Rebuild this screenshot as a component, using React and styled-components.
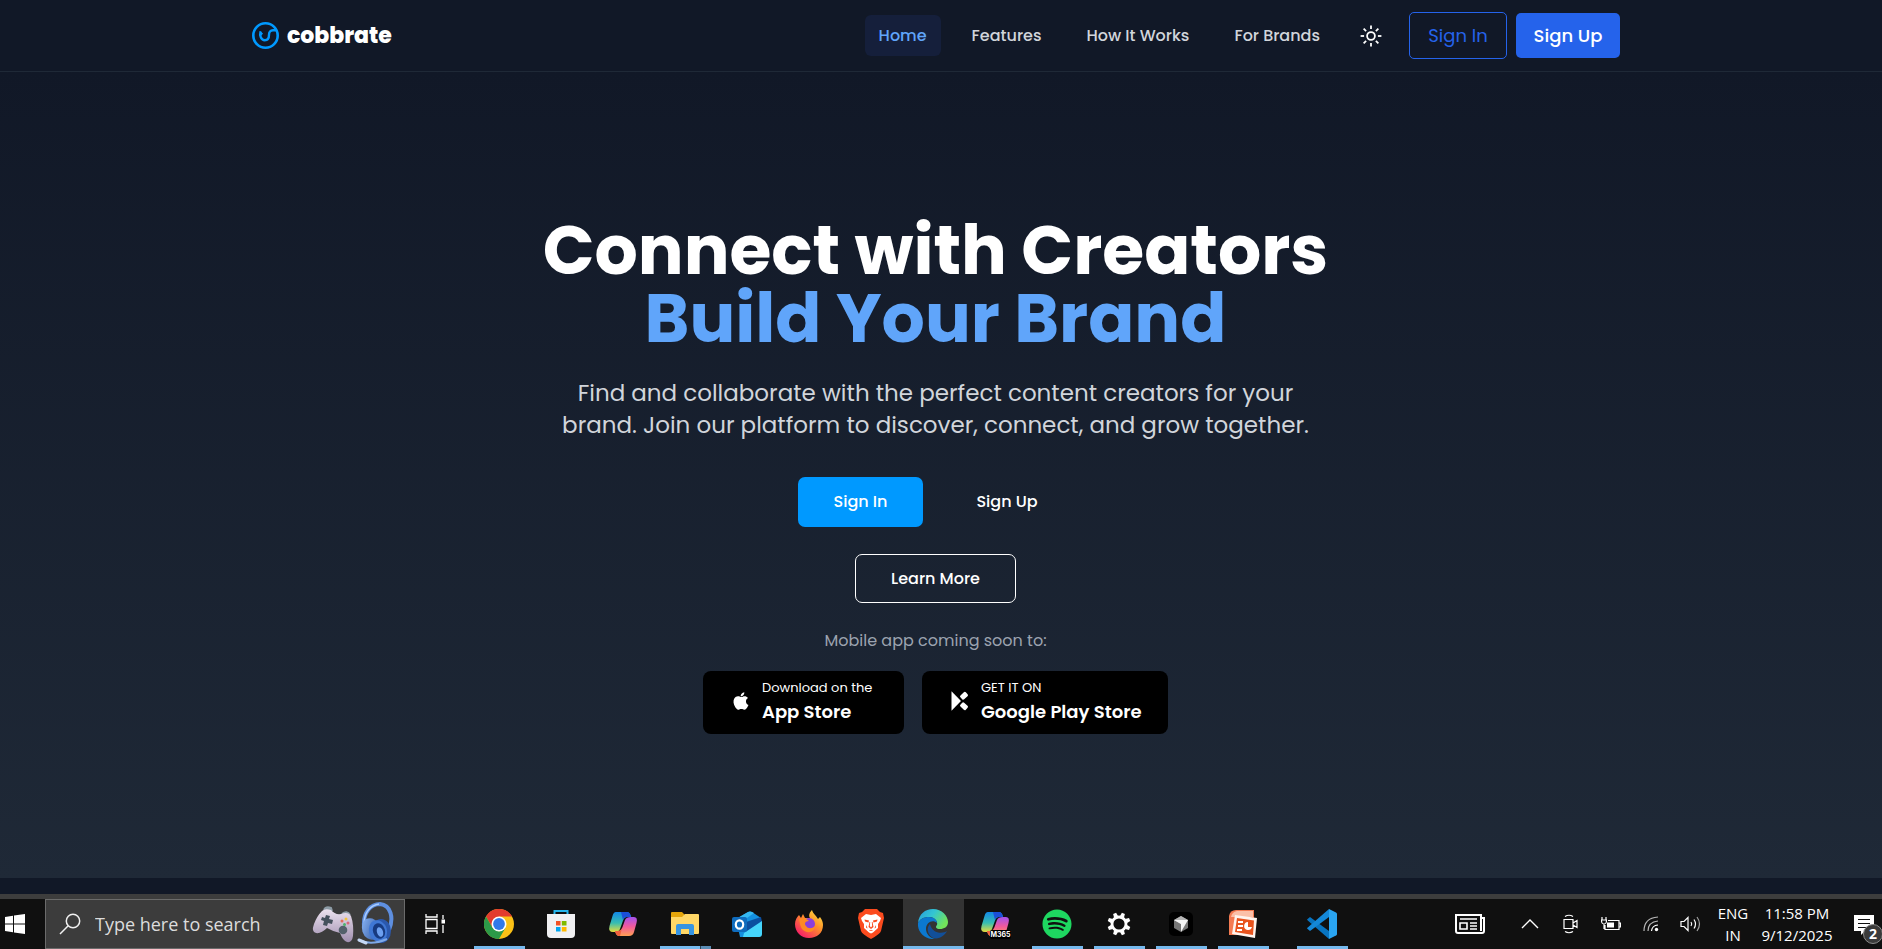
import React from "react";
import styled, { createGlobalStyle, css } from "styled-components";
import { IoLogoApple } from "react-icons/io5";
import { FaSpotify } from "react-icons/fa";

const GlobalStyle = createGlobalStyle`
  *, *::before, *::after { box-sizing: border-box; }
  html, body, #root { margin: 0; min-height: 100vh; }
  body {
    background: #111827;
    color: #ffffff;
    font-family: Poppins, Inter, "Open Sans", sans-serif;
    font-size: 16px;
  }
  button, input { font: inherit; color: inherit; }
  button { cursor: pointer; }
  a { color: inherit; text-decoration: none; }
  svg { display: block; }
`;

const Screen = styled.div`
  display: flex;
  flex-direction: column;
  min-height: 100vh;
`;

const Header = styled.header`
  height: 72px;
  padding-right: 10px;
  border-bottom: 1px solid #1f2937;
  background: #111827;
`;

const HeaderInner = styled.div`
  display: flex;
  align-items: center;
  justify-content: space-between;
  width: 100%;
  max-width: 1368px;
  height: 100%;
  margin: 0 auto;
`;

const Brand = styled.a`
  display: flex;
  align-items: center;
  gap: 8px;
  font-size: 22px;
  font-weight: 800;
  line-height: 31px;
`;

const Nav = styled.nav`
  display: flex;
  align-items: center;
  gap: 17px;
`;

const NavLink = styled.a`
  padding: 0 14px;
  border-radius: 6px;
  line-height: 41px;
  font-weight: 500;
  color: ${(p) => (p.$active ? "#60a5fa" : "#d1d5db")};
  background: ${(p) => (p.$active ? "#151f3b" : "transparent")};
`;

const HeaderActions = styled.div`
  display: flex;
  align-items: center;
  gap: 9px;
`;

const ThemeToggle = styled.button`
  display: grid;
  place-items: center;
  width: 40px;
  height: 40px;
  margin-right: 9px;
  padding: 0;
  border: 0;
  background: transparent;
`;

const AccountButton = styled.button`
  padding: 0;
  border-radius: 5px;
  font-size: 18px;
  ${(p) =>
    p.$solid
      ? css`
          width: 104px;
          height: 45px;
          border: 0;
          background: #2563eb;
          font-weight: 500;
        `
      : css`
          width: 98px;
          height: 47px;
          border: 1px solid #2563eb;
          background: transparent;
          color: #2563eb;
        `}
`;

const Hero = styled.main`
  display: flex;
  flex: 1;
  flex-direction: column;
  align-items: center;
  justify-content: center;
  padding: 0 11px 0 0;
  text-align: center;
  background: linear-gradient(#111827, #1f2937);
`;

const Title = styled.h1`
  margin: 0 0 24px;
  font-size: 68px;
  font-weight: 700;
  line-height: 68px;
`;

const Accent = styled.span`
  display: block;
  color: #60a5fa;
`;

const Lead = styled.p`
  max-width: 760px;
  margin: 0 0 36px;
  font-size: 23px;
  line-height: 32px;
  color: #d1d5db;
`;

const ButtonRow = styled.div`
  display: flex;
  align-items: center;
  gap: 18px;
  margin-bottom: ${(p) => p.$space}px;
`;

const HeroButton = styled.button`
  min-width: ${(p) => p.$width}px;
  height: ${(p) => (p.$kind === "outline" ? 49 : 50)}px;
  padding: 0 20px;
  border: ${(p) => (p.$kind === "outline" ? "1px solid #ffffff" : "0")};
  border-radius: 7px;
  background: ${(p) => (p.$kind === "primary" ? "#0099ff" : "transparent")};
  font-weight: 500;
`;

const Note = styled.p`
  margin: 0 0 18px;
  line-height: 24px;
  color: #9ca3af;
`;

const StoreButton = styled.button`
  display: flex;
  align-items: center;
  gap: 11px;
  width: ${(p) => p.$width}px;
  height: 63px;
  padding: 0 0 2px 28px;
  border: 0;
  border-radius: 8px;
  background: #000000;
  text-align: left;
`;

const StoreText = styled.span`
  display: flex;
  flex-direction: column;
`;

const StoreSmall = styled.span`
  font-size: 13px;
  line-height: 20px;
`;

const StoreName = styled.span`
  font-size: 18px;
  font-weight: 600;
  line-height: 27px;
`;

const PageEnd = styled.div`
  height: 16px;
  background: #111827;
`;

const Taskbar = styled.footer`
  display: flex;
  height: 55px;
  border-top: 5px solid #3d3d3d;
  background: #101010;
  color: #ffffff;
  font-family: "Segoe UI", "Open Sans", "Noto Sans", sans-serif;
`;

const BarButton = styled.button`
  display: flex;
  align-items: center;
  justify-content: center;
  flex: none;
  width: ${(p) => p.$width}px;
  height: 50px;
  padding: 0;
  border: 0;
  background: transparent;
`;

const StartButton = styled(BarButton)`
  justify-content: flex-start;
  padding-left: 5px;
`;

const SearchBox = styled.label`
  display: flex;
  align-items: center;
  flex: none;
  width: 360px;
  height: 50px;
  padding: 0 9px 0 13px;
  border: 1px solid #6b6b6b;
  background: #3c3c3c;
`;

const SearchInput = styled.input`
  flex: 1;
  min-width: 0;
  margin-left: 14px;
  padding: 0;
  border: 0;
  outline: 0;
  background: transparent;
  font-size: 18px;
  &::placeholder { color: #dcdcdc; opacity: 1; }
`;

const Apps = styled.div`
  display: flex;
  gap: 1px;
  padding-left: 4px;
`;

const AppButton = styled.button`
  display: grid;
  grid-template-rows: 43px 4px;
  align-content: end;
  justify-items: center;
  width: 61px;
  height: 50px;
  margin-left: ${(p) => (p.$apart ? 17 : 0)}px;
  padding: 0;
  border: 0;
  background: ${(p) => (p.$active ? "#333333" : "transparent")};
`;

const AppIcon = styled.span`
  display: grid;
  place-items: center;
  padding-right: 2px;
`;

const Indicator = styled.span`
  align-self: end;
  width: ${(p) => (p.$wide ? 61 : 51)}px;
  height: 3px;
  background: ${(p) =>
    p.$stacked
      ? "linear-gradient(90deg, #76b9ed 40px, #2d4558 40px, #2d4558 41px, #5b8db5 41px)"
      : p.$on
        ? "#76b9ed"
        : "transparent"};
`;

const Tray = styled.div`
  display: flex;
  flex: none;
  align-items: center;
  margin-left: auto;
`;

const TrayText = styled.button`
  width: ${(p) => p.$width}px;
  height: 50px;
  padding: 0;
  border: 0;
  background: transparent;
  font-size: 15px;
  line-height: 22px;
  white-space: nowrap;
`;

const Notices = styled.button`
  position: relative;
  width: 44px;
  height: 50px;
  padding: 1px 0 0 16px;
  border: 0;
  background: transparent;
`;

const Badge = styled.span`
  position: absolute;
  right: -1px;
  bottom: 5px;
  width: 20px;
  height: 20px;
  border: 1px solid #8a8a8a;
  border-radius: 50%;
  background: #3a3a3a;
  font-size: 14px;
  font-weight: 700;
  line-height: 18px;
  text-align: center;
`;

const CobbrateLogo = () => (
  <svg width="27" height="27" viewBox="0 0 27 27" fill="none" stroke="#0099ff" aria-hidden="true">
    <circle cx="13.5" cy="13.5" r="12.2" strokeWidth="2.6" />
    <path d="M8.6 9.4C7.2 14 9.4 18.3 12.8 18.3C16.4 18.3 17 15.6 17 12.8C17 10 18.4 8.3 21 8.300H25" strokeWidth="2.4" />
    <path d="M8 9L11 11.500L9 14Z" fill="#0099ff" stroke="none" />
  </svg>
);

const PlayStoreIcon = () => (
  <svg width="20" height="20" viewBox="0 0 20 20" fill="#ffffff" aria-hidden="true">
    <path d="M1.500 0.300L11 10L1.500 19.700Z" />
    <rect x="-3.700" y="-2.700" width="7.400" height="5.400" rx="1.400" transform="translate(14 4.800) rotate(-43)" />
    <rect x="-3.700" y="-2.700" width="7.400" height="5.400" rx="1.400" transform="translate(14 15.200) rotate(43)" />
  </svg>
);

const SunIcon = () => (
  <svg width="22" height="22" viewBox="-11 -11 22 22" fill="none" stroke="#ffffff" strokeWidth="1.8" aria-hidden="true">
    <circle r="3.9" />
    {[0, 45, 90, 135, 180, 225, 270, 315].map((a) => (
      <path key={a} d="M0 -6.9V-10.4" transform={`rotate(${a})`} />
    ))}
  </svg>
);

const WindowsIcon = () => (
  <svg width="20" height="20" viewBox="0 0 20 20" fill="#ffffff" aria-hidden="true">
    <path d="M0 3L8 1.8V9.4H0ZM9 1.6L20 0V9.4H9ZM0 10.4H8V18.2L0 17ZM9 10.4H20V20L9 18.4Z" />
  </svg>
);

const SearchIcon = () => (
  <svg width="22" height="22" viewBox="0 0 22 22" fill="none" stroke="#f0f0f0" strokeWidth="1.5" aria-hidden="true">
    <circle cx="14" cy="8" r="6.7" />
    <path d="M9.2 12.8L1 21" />
  </svg>
);

const GamingArt = () => (
  <svg width="84" height="44" viewBox="0 0 84 44" aria-hidden="true">
    <defs>
      <linearGradient id="pad" x1="0" y1="0" x2="0" y2="1">
        <stop offset="0" stopColor="#ece2ef" />
        <stop offset="1" stopColor="#a08fb0" />
      </linearGradient>
      <linearGradient id="cup" x1="0" y1="0" x2="1" y2="1">
        <stop offset="0" stopColor="#8db8f8" />
        <stop offset="1" stopColor="#234b96" />
      </linearGradient>
    </defs>
    <path d="M13 8Q15 4 20 6L21 9M31 12Q36 8 39 13" fill="#8c9ba5" stroke="#8c9ba5" strokeWidth="2" />
    <path d="M11 9Q14 6 20 8Q24 13 30 12Q37 9 40 14Q43 23 42 34Q41 41 36 40Q32 39 29 31Q23 30 16 26Q10 32 5 31Q0 30 3 22Q6 14 11 9Z" fill="url(#pad)" />
    <path d="M15 13L19 14L18 17L22 18L21 22L17 21L16 24L12 23L13 19L10 18L11 15L14 16Z" fill="#44505c" />
    <circle cx="32" cy="28" r="4.3" fill="#53606b" />
    <circle cx="35" cy="17" r="1.5" fill="#f4c23d" />
    <circle cx="31" cy="19" r="1.5" fill="#e36c5b" />
    <circle cx="37" cy="21" r="1.5" fill="#d9667d" />
    <circle cx="33.5" cy="22.5" r="1.5" fill="#4eb36b" />
    <path d="M53 24C52 10 60 2 69 2C80 3 83 16 78 28" fill="none" stroke="#5e8fe0" strokeWidth="4" />
    <path d="M53 22C53 10 60 3 68 2" fill="none" stroke="#a9ccff" strokeWidth="1.5" />
    <ellipse cx="70" cy="29" rx="10" ry="12" fill="#2b58ad" />
    <ellipse cx="60" cy="27" rx="9" ry="11" transform="rotate(-18 60 27)" fill="url(#cup)" />
    <ellipse cx="67" cy="29" rx="9" ry="11" transform="rotate(-18 67 29)" fill="#3f77d4" />
    <ellipse cx="68" cy="29" rx="6" ry="8" transform="rotate(-18 68 29)" fill="#173a80" />
    <ellipse cx="69" cy="30" rx="3" ry="5" transform="rotate(-18 69 30)" fill="#6da0f0" />
    <path d="M48 38Q60 44 76 37" fill="none" stroke="#7ea9e8" strokeWidth="2" />
    <path d="M48 38L55 41" stroke="#c5d8f5" strokeWidth="3" strokeLinecap="round" />
  </svg>
);

const TaskViewIcon = () => (
  <svg width="20" height="20" viewBox="0 0 20 20" fill="none" stroke="#ffffff" strokeWidth="1.3" aria-hidden="true">
    <path d="M1 0V3H12V0M1 20V17H12V20M1 5.5H12V14.5H1ZM18 1V5M18 11V19" />
    <path d="M16.5 5.5H20V9.5H16.5Z" fill="#ffffff" stroke="none" />
  </svg>
);

const ChromeIcon = () => (
  <svg width="30" height="30" viewBox="0 0 30 30" aria-hidden="true">
    <circle cx="15" cy="15" r="15" fill="#fbc116" />
    <path d="M15 15V7.5H28A15 15 0 0 0 2 7.5L8.5 18.7Z" fill="#e33b2e" />
    <path d="M15 22.5L8.5 18.7L2 7.5A15 15 0 0 0 15 30L21.5 18.7Z" fill="#2c9a48" />
    <circle cx="15" cy="15" r="7.5" fill="#ffffff" />
    <circle cx="15" cy="15" r="5.9" fill="#3279ea" />
  </svg>
);

const StoreIcon = () => (
  <svg width="30" height="30" viewBox="0 0 30 30" aria-hidden="true">
    <path d="M8.5 6V2H21.5V6" fill="none" stroke="#26b5ec" strokeWidth="2" />
    <path d="M1 5H29V25Q29 29 25 29H5Q1 29 1 25Z" fill="#f0f0f2" />
    <path d="M10 12H14.5V16.5H10Z" fill="#f25022" />
    <path d="M15.8 12H20.5V16.5H15.8Z" fill="#7fba00" />
    <path d="M10 18H14.5V22.5H10Z" fill="#00a4ef" />
    <path d="M15.8 18H20.5V22.5H15.8Z" fill="#ffb900" />
  </svg>
);

const CopilotIcon = ({ id, labelled }) => (
  <svg width="32" height="30" viewBox="0 0 32 30" aria-hidden="true">
    <defs>
      <linearGradient id={`${id}a`} x1="0" y1="0" x2="0" y2="1">
        <stop offset="0" stopColor="#1288e8" />
        <stop offset="0.55" stopColor="#37bdb1" />
        <stop offset="1" stopColor="#e7dc3b" />
      </linearGradient>
      <linearGradient id={`${id}b`} x1="0" y1="0" x2="0" y2="1">
        <stop offset="0" stopColor="#a252f0" />
        <stop offset="0.5" stopColor="#f15a9b" />
        <stop offset="1" stopColor="#ffa052" />
      </linearGradient>
    </defs>
    <path d="M9 3H20Q23 3 24 8H20Q17 8 15.5 13L13 20Q12 23 8 23H6Q1 23 2.5 17L5.5 7Q6.500 3 9 3Z" fill={`url(#${id}a)`} />
    <path d="M14 3H20Q23 3 24 8H20Q17 8 16 11Z" fill="#1b4fd8" />
    <path d="M24 8H27Q31 8 29.500 14L27 23Q26 27 22 27H12Q9 27 8 22H11Q14 22 15.500 18L18 11Q19 8 24 8Z" fill={`url(#${id}b)`} />
    <path d="M8 22H11Q14 22 15 19L13 27Q9 27 8 22Z" fill="#f0603c" />
    {labelled && (
      <>
        <rect x="11" y="21" width="21" height="9" rx="2" fill="#000000" />
        <text x="21.5" y="28.200" fill="#ffffff" fontSize="7" fontWeight="700" textAnchor="middle" fontFamily="Inter, sans-serif">
          M365
        </text>
      </>
    )}
  </svg>
);

const FolderIcon = () => (
  <svg width="28" height="28" viewBox="0 0 28 28" aria-hidden="true">
    <path d="M0 3Q0 2 1 2H11L14 5H27Q28 5 28 6V10H0Z" fill="#e5a50a" />
    <path d="M0 7H11L14 4H27Q28 4 28 5V23Q28 24 27 24H1Q0 24 0 23Z" fill="#ffd766" />
    <path d="M5 25V16Q5 14 7 14H21Q23 14 23 16V25H18V19H10V25Z" fill="#3594e2" />
  </svg>
);

const OutlookIcon = () => (
  <svg width="30" height="28" viewBox="0 0 30 28" aria-hidden="true">
    <path d="M4 9L16 2Q18 1 20 2L29 8V24Q29 27 26 27H8Z" fill="#1490df" />
    <path d="M14 12L29 7L30 12L14 22Z" fill="#0b4f9f" />
    <path d="M12 23L30 11V24Q30 27 27 27H11Z" fill="#45d5fb" />
    <path d="M4 9L16 2Q18 1 20 2L22 3L8 13Z" fill="#35b8f1" />
    <rect y="7" width="15" height="15" rx="2" fill="#0f6cbd" />
    <ellipse cx="7.500" cy="14.500" rx="3.700" ry="4.200" fill="none" stroke="#ffffff" strokeWidth="2.200" />
  </svg>
);

const FirefoxIcon = () => (
  <svg width="30" height="30" viewBox="0 0 30 30" aria-hidden="true">
    <defs>
      <linearGradient id="fox" x1="1" y1="0" x2="0.2" y2="1">
        <stop offset="0" stopColor="#fff044" />
        <stop offset="0.45" stopColor="#ff9229" />
        <stop offset="1" stopColor="#f5156c" />
      </linearGradient>
    </defs>
    <path d="M15 29C7 29 1 23 1 15C1 11 3 8 5 6L7 9L9 5L11 9H16C14 6 16 3 18 1C19 5 22 6 24 10L26 8C28 11 29 13 29 16C29 24 23 29 15 29Z" fill="url(#fox)" />
    <circle cx="15" cy="15" r="6" fill="#8b3fdb" />
    <path d="M5 10C8 8 12 9 15 12C11 12 10 15 12 17C14 20 18 20 21 17C21 24 12 25 8 20C6 17 6 14 5 10Z" fill="#ff8a23" />
  </svg>
);

const BraveIcon = () => (
  <svg width="28" height="30" viewBox="0 0 28 30" aria-hidden="true">
    <path d="M8 0H20L23 3L26 4L27 9L24 22Q23 25 14 30Q5 25 4 22L1 9L2 4L5 3Z" fill="#fb4b1e" />
    <path d="M9 5L14 6L19 5L24 9L23 12L21 15L21 19L16 23.500L14 24.500L12 23.500L7 19L7 15L5 12L4 9Z" fill="#ffffff" />
    <path d="M7.500 10.500L12 11.500L11.500 13.500L8 12.500ZM20.500 10.500L16 11.500L16.500 13.500L20 12.500ZM12.500 13H13.200L12.800 17L14 18.500L15.200 17L14.800 13H15.500L16.500 18L14 20L11.500 18ZM9.500 16L10.500 19.500L9 18.500ZM18.500 16L17.500 19.500L19 18.500ZM11.500 22L14 20.800L16.500 22L14 21.800Z" fill="#fb4b1e" />
  </svg>
);

const EdgeIcon = () => (
  <svg width="30" height="30" viewBox="0 0 30 30" aria-hidden="true">
    <defs>
      <linearGradient id="edgeTop" x1="0" y1="0" x2="1" y2="0.5">
        <stop offset="0" stopColor="#279bde" />
        <stop offset="0.5" stopColor="#33c5d2" />
        <stop offset="1" stopColor="#72e35a" />
      </linearGradient>
    </defs>
    <path d="M0 14C1 5 7 0 15 0C24 0 30 7 30 13C30 18 26 20 22 20C18 20 17 18 19 16C20 14 18 8 11 8C6 8 2 10 0 14Z" fill="url(#edgeTop)" />
    <path d="M0 14C2 10 6 8 11 8C16 8 19 11 19 14C15 10 8 13 8 20C8 25 12 29 17 30C7 31 -1 23 0 14Z" fill="#0b78cf" />
    <path d="M12 15C7 20 11 29 18 29.500C23 29 27 26 29 22C25 25 14 25 12 15Z" fill="#124f99" />
  </svg>
);

const SpotifyIcon = () => (
  <FaSpotify size={30} color="#1ed760" aria-hidden="true" />
);

const GearIcon = () => (
  <svg width="24" height="24" viewBox="-12 -12 24 24" aria-hidden="true">
    <circle r="7" fill="none" stroke="#ffffff" strokeWidth="2.800" />
    {[22.5, 67.5, 112.5, 157.5, 202.5, 247.5, 292.5, 337.5].map((a) => (
      <path key={a} d="M-2.200 -7.500L-1.600 -11.500H1.600L2.200 -7.500Z" fill="#ffffff" transform={`rotate(${a})`} />
    ))}
  </svg>
);

const CubeIcon = () => (
  <svg width="24" height="24" viewBox="0 0 24 24" aria-hidden="true">
    <rect width="24" height="24" rx="5" fill="#000000" />
    <path d="M12 4L19 8V16L12 20L5 16V8Z" fill="#777777" />
    <path d="M5 8L12 4L19 8L12 12Z" fill="#b5b5b5" />
    <path d="M5 8H19L12 20V12Z" fill="#f4f4f4" />
  </svg>
);

const PowerPointIcon = () => (
  <svg width="30" height="30" viewBox="0 0 30 30" aria-hidden="true">
    <path d="M1 7Q2 1 8 1H26V26H1Z" fill="#f47b52" />
    <path d="M3 8Q4 3 9 2H25V8Z" fill="#fbc0a8" />
    <path d="M7 6L29 9L27 29L4 25Z" fill="#fff4ee" />
    <path d="M9 9L26 11.500L25 26L7 23Z" fill="#e8541e" />
    <path d="M10 13H15M10 17H15M9 21H14" stroke="#ffffff" strokeWidth="2" />
    <path d="M20 13A4 4 0 1 0 24 18H20Z" fill="#ffffff" />
  </svg>
);

const CodeIcon = () => (
  <svg width="30" height="30" viewBox="0 0 30 30" aria-hidden="true">
    <path d="M22 0L29 3.500Q30 4 30 5V25Q30 26 29 26.500L22 30Z" fill="#2aa5f2" />
    <path d="M0 10.500L3 8L22 22V30L1 11.800Z" fill="#0874c0" />
    <path d="M0 19.500L3 22L22 8V0L1 18.200Z" fill="#1488d8" />
  </svg>
);

const NewsIcon = () => (
  <svg width="30" height="20" viewBox="0 0 30 20" fill="none" stroke="#ffffff" strokeWidth="2" aria-hidden="true">
    <path d="M26 4H29V17Q29 19 27 19H3Q1 19 1 17V1H26V17" />
    <path d="M5 9H12V15H5ZM5 5H22M15 9H22M15 12H22M15 15H22" strokeWidth="1.600" />
  </svg>
);

const ChevronIcon = () => (
  <svg width="18" height="10" viewBox="0 0 18 10" fill="none" stroke="#ffffff" strokeWidth="1.400" aria-hidden="true">
    <path d="M1 9L9 1L17 9" />
  </svg>
);

const MeetIcon = () => (
  <svg width="16" height="20" viewBox="0 0 16 20" fill="none" stroke="#ffffff" strokeWidth="1.200" aria-hidden="true">
    <path d="M1 5.500H10V14.500H1ZM10 9L14 6.500V13.500L10 11M2 2.500Q6 0 10 2.500M2 17.500Q6 20 10 17.500" />
  </svg>
);

const BatteryIcon = () => (
  <svg width="20" height="14" viewBox="0 0 20 14" fill="none" stroke="#ffffff" strokeWidth="1.200" aria-hidden="true">
    <path d="M7 3.500H18V12.500H4V8M18 6H19.500V10H18M1 0V3M5 0V3M0.600 3H5.400V5Q5 7 3 7Q1 7 0.600 5ZM3 7V12" />
    <path d="M6 5.500H13V10.500H6Z" fill="#ffffff" stroke="none" />
  </svg>
);

const WifiIcon = () => (
  <svg width="16" height="16" viewBox="0 0 16 16" fill="none" stroke="#ffffff" strokeWidth="1.200" aria-hidden="true">
    <path d="M1 15Q1 2 15 1M5 15Q5 6 15 5" stroke="#b8b8b8" />
    <path d="M8.500 15Q9 9.500 15 9" />
    <circle cx="13.500" cy="13.500" r="1.700" fill="#ffffff" stroke="none" />
  </svg>
);

const VolumeIcon = () => (
  <svg width="22" height="16" viewBox="0 0 22 16" fill="none" stroke="#ffffff" strokeWidth="1.200" aria-hidden="true">
    <path d="M1 5.500H4L8 1.500V14.500L4 10.500H1ZM11 6Q12.500 8 11 10M14 3.500Q17 8 14 12.500" />
    <path d="M17 1Q22 8 17 15" stroke="#a0a0a0" />
  </svg>
);

const NoticeIcon = () => (
  <svg width="20" height="20" viewBox="0 0 20 20" aria-hidden="true">
    <path d="M0 0H20V16H11L7 20V16H0Z" fill="#ffffff" />
    <path d="M4 4.500H16M4 8.500H16M4 12.500H12" stroke="#101010" strokeWidth="1.200" />
  </svg>
);

const NAV = ["Home", "Features", "How It Works", "For Brands"];

const APPS = [
  { name: "Chrome", icon: <ChromeIcon />, on: true },
  { name: "Microsoft Store", icon: <StoreIcon /> },
  { name: "Copilot", icon: <CopilotIcon id="cp" /> },
  { name: "File Explorer", icon: <FolderIcon />, on: true, stacked: true },
  { name: "Outlook", icon: <OutlookIcon /> },
  { name: "Firefox", icon: <FirefoxIcon /> },
  { name: "Brave", icon: <BraveIcon /> },
  { name: "Edge", icon: <EdgeIcon />, on: true, active: true },
  { name: "Microsoft 365", icon: <CopilotIcon id="ms" labelled /> },
  { name: "Spotify", icon: <SpotifyIcon />, on: true },
  { name: "Settings", icon: <GearIcon />, on: true },
  { name: "Cursor", icon: <CubeIcon />, on: true },
  { name: "PowerPoint", icon: <PowerPointIcon />, on: true },
  { name: "Visual Studio Code", icon: <CodeIcon />, on: true, apart: true },
];

const TRAY = [
  { name: "News", icon: <NewsIcon />, width: 80 },
  { name: "Show hidden icons", icon: <ChevronIcon />, width: 40 },
  { name: "Meet now", icon: <MeetIcon />, width: 42 },
  { name: "Battery", icon: <BatteryIcon />, width: 38 },
  { name: "Wi-Fi", icon: <WifiIcon />, width: 42 },
  { name: "Volume", icon: <VolumeIcon />, width: 38 },
];

function SiteHeader() {
  return (
    <Header>
      <HeaderInner>
        <Brand href="#">
          <CobbrateLogo />
          cobbrate
        </Brand>
        <HeaderActions>
          <Nav>
            {NAV.map((item, i) => (
              <NavLink key={item} href="#" $active={i === 0}>
                {item}
              </NavLink>
            ))}
            <ThemeToggle aria-label="Toggle theme">
              <SunIcon />
            </ThemeToggle>
          </Nav>
          <AccountButton>Sign In</AccountButton>
          <AccountButton $solid>Sign Up</AccountButton>
        </HeaderActions>
      </HeaderInner>
    </Header>
  );
}

function HeroSection() {
  return (
    <Hero>
      <Title>
        Connect with Creators
        <Accent>Build Your Brand</Accent>
      </Title>
      <Lead>
        Find and collaborate with the perfect content creators for your brand. Join our platform to discover,
        connect, and grow together.
      </Lead>
      <ButtonRow $space={27}>
        <HeroButton $kind="primary" $width={125}>Sign In</HeroButton>
        <HeroButton $kind="plain" $width={132}>Sign Up</HeroButton>
      </ButtonRow>
      <ButtonRow $space={26}>
        <HeroButton $kind="outline" $width={161}>Learn More</HeroButton>
      </ButtonRow>
      <Note>Mobile app coming soon to:</Note>
      <ButtonRow $space={0}>
        <StoreButton $width={201}>
          <IoLogoApple size={20} aria-hidden="true" />
          <StoreText>
            <StoreSmall>Download on the</StoreSmall>
            <StoreName>App Store</StoreName>
          </StoreText>
        </StoreButton>
        <StoreButton $width={246}>
          <PlayStoreIcon />
          <StoreText>
            <StoreSmall>GET IT ON</StoreSmall>
            <StoreName>Google Play Store</StoreName>
          </StoreText>
        </StoreButton>
      </ButtonRow>
    </Hero>
  );
}

function DesktopTaskbar() {
  return (
    <Taskbar>
      <StartButton $width={45} aria-label="Start">
        <WindowsIcon />
      </StartButton>
      <SearchBox>
        <SearchIcon />
        <SearchInput type="text" placeholder="Type here to search" aria-label="Type here to search" />
        <GamingArt />
      </SearchBox>
      <BarButton $width={60} aria-label="Task view">
        <TaskViewIcon />
      </BarButton>
      <Apps>
        {APPS.map((app) => (
          <AppButton key={app.name} aria-label={app.name} $active={app.active} $apart={app.apart}>
            <AppIcon>{app.icon}</AppIcon>
            <Indicator $on={app.on} $wide={app.active} $stacked={app.stacked} />
          </AppButton>
        ))}
      </Apps>
      <Tray>
        {TRAY.map((item) => (
          <BarButton key={item.name} $width={item.width} aria-label={item.name}>
            {item.icon}
          </BarButton>
        ))}
        <TrayText $width={46}>
          ENG
          <br />
          IN
        </TrayText>
        <TrayText $width={82}>
          11:58 PM
          <br />
          9/12/2025
        </TrayText>
        <Notices aria-label="Notifications">
          <NoticeIcon />
          <Badge>2</Badge>
        </Notices>
      </Tray>
    </Taskbar>
  );
}

export default function App() {
  return (
    <Screen>
      <GlobalStyle />
      <SiteHeader />
      <HeroSection />
      <PageEnd />
      <DesktopTaskbar />
    </Screen>
  );
}
